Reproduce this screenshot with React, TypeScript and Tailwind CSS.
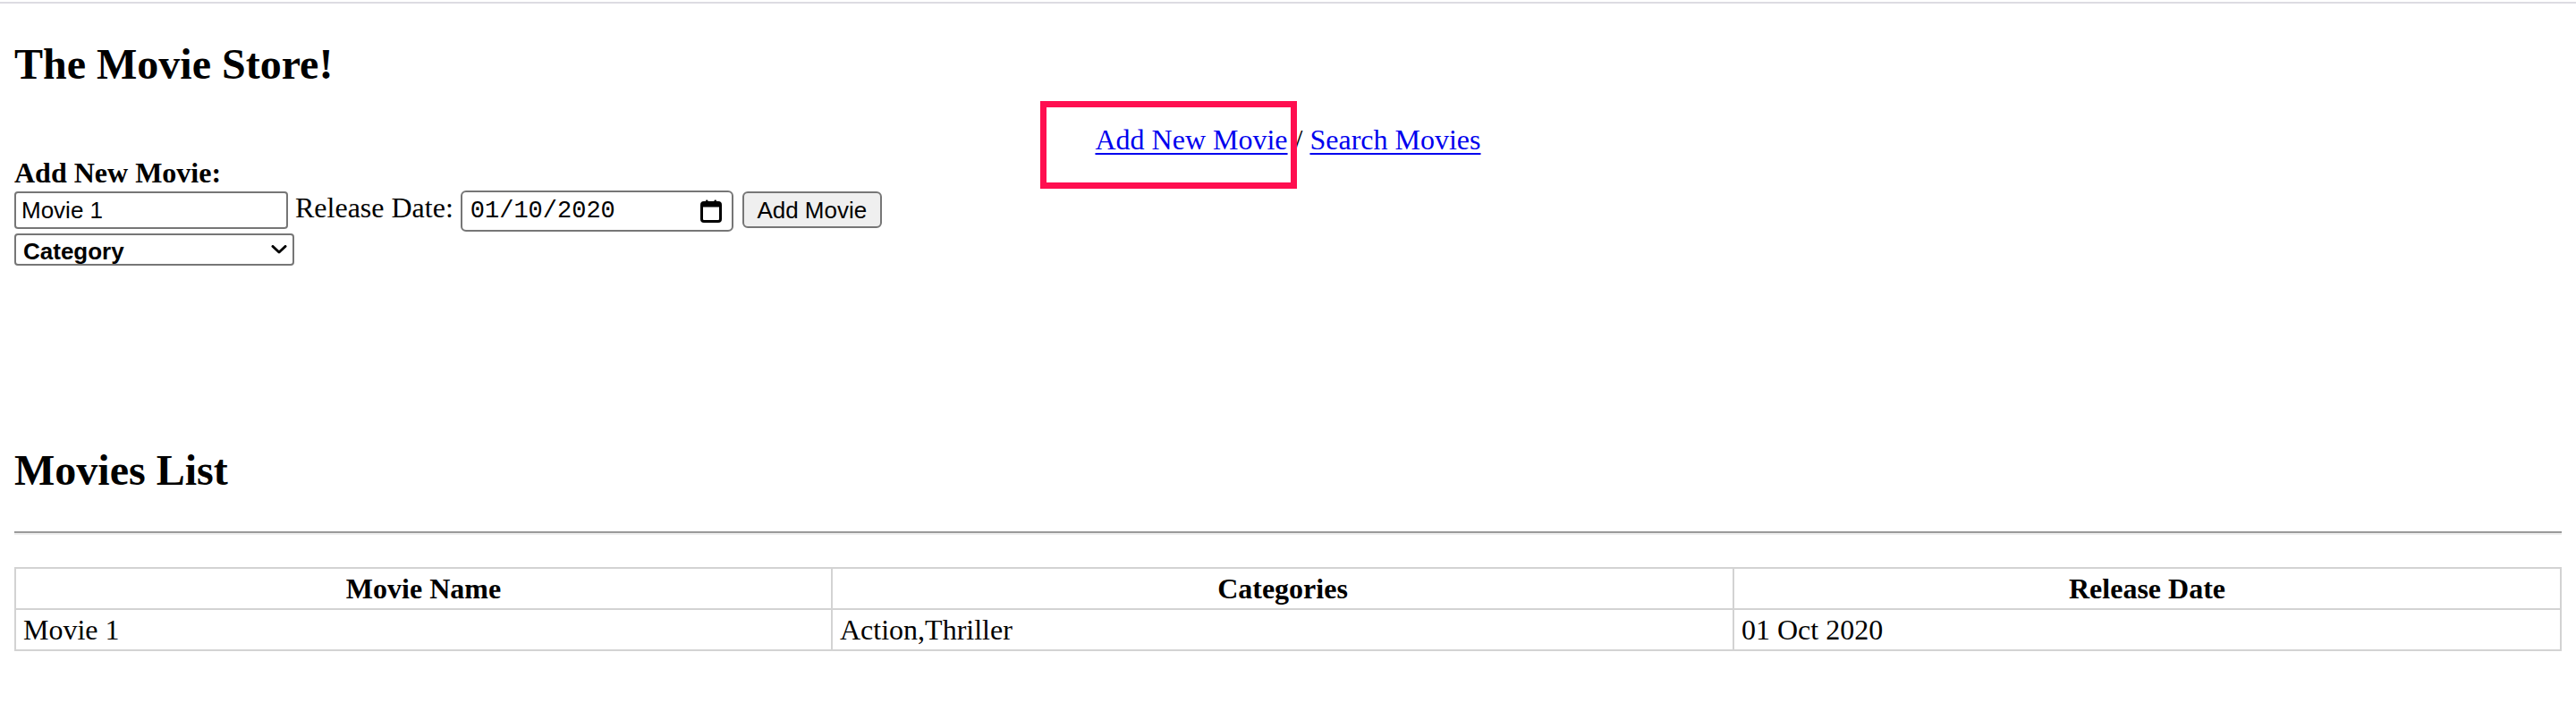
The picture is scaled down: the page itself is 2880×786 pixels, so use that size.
import {ReactNode} from 'react'

type Movie = {
  name: string
  categories: string[]
  releaseDate: string
}

const movies: Movie[] = [
  {name: 'Movie 1', categories: ['Action', 'Thriller'], releaseDate: '01 Oct 2020'},
]

// the page is a plain html page shot at 2x, so every size here is doubled
export default function App() {
  return (
    <div className="relative flex min-h-screen flex-col bg-white font-['Liberation_Serif','Times_New_Roman',serif] text-[32px] leading-[36px] text-black">
      <div className="mt-[2px] h-[2px] bg-[#dddce2]"/>
      <div className="flex flex-col px-[16px]">
        <h2 className="mt-[41px] text-[48px] font-bold leading-[53px]">The Movie Store!</h2>
        <Nav/>
        <AddMovieForm/>
        <MoviesList movies={movies}/>
      </div>

      {/* red highlight drawn over the screenshot */}
      <div className="pointer-events-none absolute left-[1163px] top-[113px] h-[98px] w-[287px] border-[7px] border-[#ff0f50]"/>
    </div>
  )
}

function Nav() {
  return (
    <div className="mt-[40px] text-center">
      <NavLink>Add New Movie</NavLink> / <NavLink>Search Movies</NavLink>
    </div>
  )
}

function NavLink({children}: { children: ReactNode }) {
  return (
    <a href="#" className="text-[#0000ee] underline decoration-2 underline-offset-[4px]">
      {children}
    </a>
  )
}

function AddMovieForm() {
  return (
    <form className="mt-[1px] flex flex-col" onSubmit={(e) => e.preventDefault()}>
      <label className="font-bold">Add New Movie:</label>
      <div className="mt-[2px] flex items-start">
        <input
          type="text"
          defaultValue="Movie 1"
          className="mt-[1px] h-[42px] w-[306px] rounded-[4px] border-2 border-[#767676] bg-white px-[6px] font-['Liberation_Sans',Arial,sans-serif] text-[26px] text-black outline-none"
        />
        <span className="ml-[8px] mt-[1px]">Release Date:</span>
        <DateField value="01/10/2020"/>
        <button
          type="submit"
          className="ml-[10px] mt-[1px] h-[41px] w-[156px] rounded-[6px] border-2 border-[#767676] bg-[#efefef] font-['Liberation_Sans',Arial,sans-serif] text-[26px] leading-none text-black"
        >
          Add Movie
        </button>
      </div>
      <div className="relative mt-[2px] w-[313px]">
        <select
          defaultValue=""
          className="h-[36px] w-full appearance-none rounded-[4px] border-2 border-[#767676] bg-white py-0 pl-[8px] pr-[30px] font-['Liberation_Sans',Arial,sans-serif] text-[26px] font-bold text-black outline-none"
        >
          <option value="">Category</option>
          <option value="action">Action</option>
          <option value="thriller">Thriller</option>
        </select>
        <svg className="pointer-events-none absolute right-[8px] top-[13px] h-[10px] w-[18px]" viewBox="0 0 18 10" fill="none">
          <polyline points="2,1.5 9,8 16,1.5" stroke="#000" strokeWidth="3" strokeLinecap="round" strokeLinejoin="round"/>
        </svg>
      </div>
    </form>
  )
}

// looks like the mac date input
function DateField({value}: { value: string }) {
  return (
    <div className="ml-[8px] flex h-[46px] w-[305px] items-center justify-between rounded-[6px] border-2 border-[#767676] bg-white pl-[9px] pr-[11px]">
      <span className="font-['Liberation_Mono','DejaVu_Sans_Mono',monospace] text-[27px] leading-none">{value}</span>
      <CalendarIcon/>
    </div>
  )
}

function CalendarIcon() {
  return (
    <svg className="h-[26px] w-[24px]" viewBox="0 0 24 26" fill="none">
      <rect x="6" y="0.5" width="2.5" height="5" rx="1" fill="#000"/>
      <rect x="15.5" y="0.5" width="2.5" height="5" rx="1" fill="#000"/>
      <rect x="1.5" y="3.5" width="21" height="21" rx="2.5" stroke="#000" strokeWidth="3"/>
      <rect x="1.5" y="3.5" width="21" height="5" fill="#000"/>
    </svg>
  )
}

function MoviesList({movies}: { movies: Movie[] }) {
  return (
    <>
      <h2 className="mt-[202px] text-[48px] font-bold leading-[53px]">Movies List</h2>
      <hr className="mt-[42px] border-0 border-t-2 border-b-2 border-t-[#9a9a9a] border-b-[#eeeeee]"/>
      <table className="mt-[36px] w-full table-fixed border-collapse border-2 border-[#d3d3d3]">
        <colgroup>
          <col className="w-[913px]"/>
          <col className="w-[1008px]"/>
          <col/>
        </colgroup>
        <thead>
          <tr>
            <th className="border-2 border-[#d3d3d3] px-[8px] py-[4px] text-center font-bold">Movie Name</th>
            <th className="border-2 border-[#d3d3d3] px-[8px] py-[4px] text-center font-bold">Categories</th>
            <th className="border-2 border-[#d3d3d3] px-[8px] py-[4px] text-center font-bold">Release Date</th>
          </tr>
        </thead>
        <tbody>
          {movies.map((movie) => (
            <tr key={movie.name}>
              <td className="border-2 border-[#d3d3d3] px-[8px] py-[4px]">{movie.name}</td>
              <td className="border-2 border-[#d3d3d3] px-[8px] py-[4px]">{movie.categories.join(',')}</td>
              <td className="border-2 border-[#d3d3d3] px-[8px] py-[4px]">{movie.releaseDate}</td>
            </tr>
          ))}
        </tbody>
      </table>
    </>
  )
}
